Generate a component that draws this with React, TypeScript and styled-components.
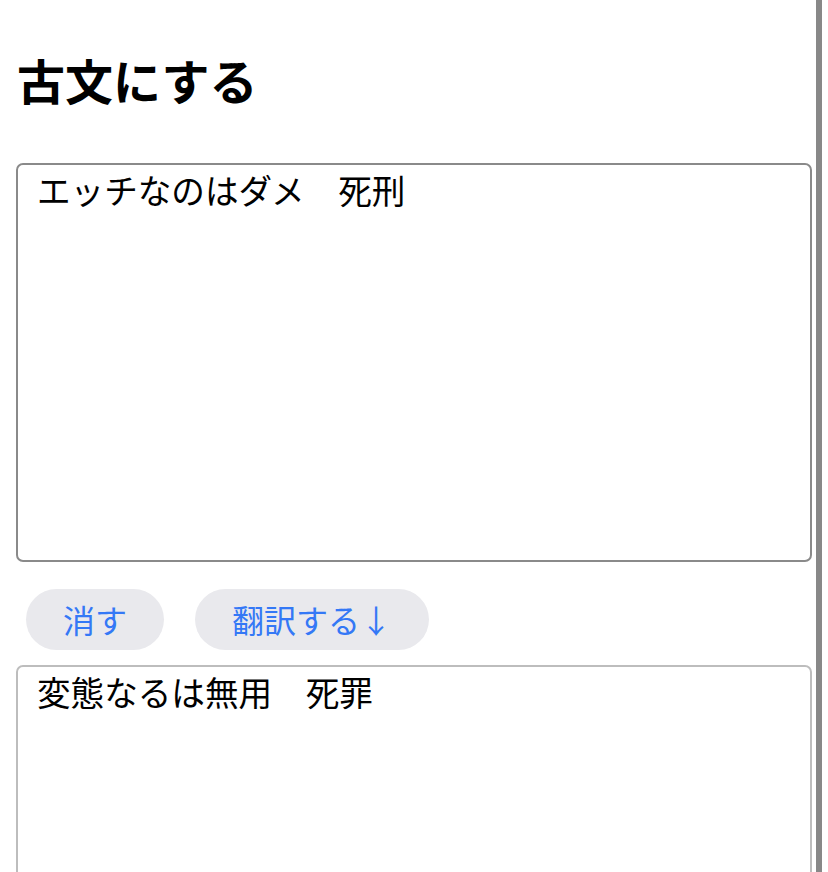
import { createGlobalStyle, styled } from "styled-components";

const GlobalStyle = createGlobalStyle`
  html, body {
    margin: 0;
    padding: 0;
    background: #ffffff;
    overflow: hidden;
  }
  body {
    font-family: "Noto Sans CJK JP", "Noto Sans", sans-serif;
    color: #000000;
  }
`;

const App = () => {
  return (
    <>
      <GlobalStyle />
      <Page>
        <Main>
          <Title>古文にする</Title>
          <TextBox defaultValue="エッチなのはダメ　死刑" />
          <ButtonRow>
            <PillButton type="button">消す</PillButton>
            <PillButton type="button">翻訳する↓</PillButton>
          </ButtonRow>
          <TextBox $readOnly readOnly defaultValue="変態なるは無用　死罪" />
        </Main>
        <SideBar />
      </Page>
    </>
  );
};

export default App;

const Page = styled.div`
  display: flex;
  width: 828px;
  height: 872px;
  overflow: hidden;
`;

const Main = styled.main`
  display: flex;
  flex-direction: column;
  width: 796px;
  padding: 52px 0 0 16px;
`;

const Title = styled.h1`
  margin: 0 0 56px 1px;
  font-size: 48px;
  line-height: 55px;
  font-weight: 700;
`;

const TextBox = styled.textarea<{ $readOnly?: boolean }>`
  box-sizing: border-box;
  width: 796px;
  height: 399px;
  flex-shrink: 0;
  margin: 0;
  padding: 5px 19px;
  border: 2px solid ${({ $readOnly }) => ($readOnly ? "#bdbdbd" : "#8a8a8a")};
  border-radius: 7px;
  font-family: "Noto Sans CJK JP", sans-serif;
  font-size: 33.6px;
  line-height: 40px;
  color: #000000;
  background: #ffffff;
  resize: none;
  outline: none;
`;

const ButtonRow = styled.div`
  display: flex;
  gap: 31px;
  margin: 27px 0 15px 10px;
`;

const PillButton = styled.button`
  height: 61px;
  padding: 0 37px;
  border: none;
  border-radius: 31px;
  background: #e9e9ed;
  color: #3478f6;
  font-family: "Noto Sans CJK JP", sans-serif;
  font-size: 32px;
  line-height: 61px;
  cursor: pointer;
`;

const SideBar = styled.div`
  width: 6px;
  height: 872px;
  margin-left: 4px;
  background: #888888;
`;
